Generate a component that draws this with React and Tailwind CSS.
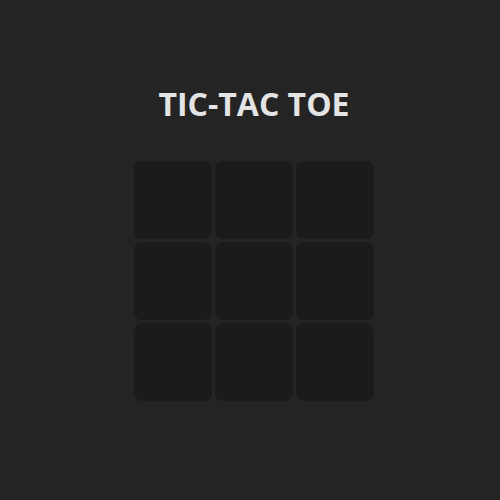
export default function App() {
  const cells = Array.from({ length: 9 });
  return (
    <div className="min-h-screen w-full bg-[#242424] flex flex-col items-center pl-2 pt-[84px]" style={{ fontFamily: '"Open Sans", sans-serif' }}>
      <h1 className="text-[32px] font-bold leading-[40px] text-[#e4e4e4]">TIC-TAC TOE</h1>
      <div className="mt-[37px] grid grid-cols-[repeat(3,78px)] grid-rows-[repeat(3,78px)] gap-[3px]">
        {cells.map((_, i) => (
          <div key={i} className="rounded-lg bg-[#1b1b1b]" />
        ))}
      </div>
    </div>
  );
}
